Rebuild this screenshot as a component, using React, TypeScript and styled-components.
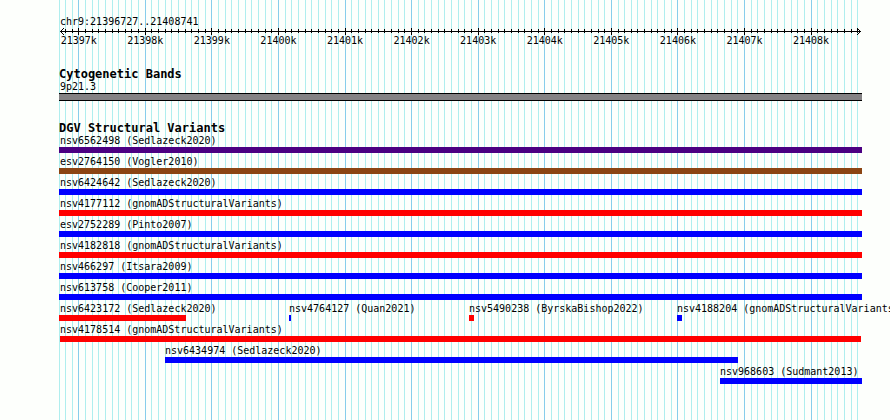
import React from "react";
import styled, { createGlobalStyle } from "styled-components";

const VIEW_START = 21396704;
const VIEW_END = 21408765;

const percent = (bp: number) => ((bp - VIEW_START) / (VIEW_END - VIEW_START)) * 100;

const TICKS = Array.from({ length: 121 }, (_, i) => 21396700 + i * 100).map((bp) => ({
  bp,
  major: bp % 1000 === 0,
}));

interface Feature {
  name: string;
  color: string;
  start?: number;
  end?: number;
}

const BLUE = "#0000ff";
const RED = "#ff0000";

const ROWS: Feature[][] = [
  [{ name: "nsv6562498 (Sedlazeck2020)", color: "#4b0082" }],
  [{ name: "esv2764150 (Vogler2010)", color: "#8b4513" }],
  [{ name: "nsv6424642 (Sedlazeck2020)", color: BLUE }],
  [{ name: "nsv4177112 (gnomADStructuralVariants)", color: RED }],
  [{ name: "esv2752289 (Pinto2007)", color: BLUE }],
  [{ name: "nsv4182818 (gnomADStructuralVariants)", color: RED }],
  [{ name: "nsv466297 (Itsara2009)", color: BLUE }],
  [{ name: "nsv613758 (Cooper2011)", color: BLUE }],
  [
    { name: "nsv6423172 (Sedlazeck2020)", color: RED, end: 21398612 },
    { name: "nsv4764127 (Quan2021)", color: BLUE, start: 21400159, end: 21400189 },
    { name: "nsv5490238 (ByrskaBishop2022)", color: RED, start: 21402862, end: 21402937 },
    { name: "nsv4188204 (gnomADStructuralVariants)", color: BLUE, start: 21405986, end: 21406061 },
  ],
  [{ name: "nsv4178514 (gnomADStructuralVariants)", color: RED, start: 21396719, end: 21408750 }],
  [{ name: "nsv6434974 (Sedlazeck2020)", color: BLUE, start: 21398296, end: 21406903 }],
  [{ name: "nsv968603 (Sudmant2013)", color: BLUE, start: 21406632 }],
];

const GlobalStyle = createGlobalStyle`
  body {
    margin: 0;
    background: #fdfffc;
    overflow-x: hidden;
  }
`;

const Page = styled.main`
  box-sizing: border-box;
  display: flex;
  min-height: 100vh;
  padding: 0 28px 0 59px;
  color: #000;
  font: 10px/13px "DejaVu Sans Mono", "Liberation Mono", monospace;
  white-space: nowrap;
`;

const Panel = styled.div`
  position: relative;
  flex: 1;
  min-width: 0;
  padding: 15px 0 32px;
`;

const GridLines = styled.svg`
  position: absolute;
  inset: 0;
  width: 100%;
  height: 100%;
`;

const Content = styled.div`
  position: relative;
`;

const Label = styled.div`
  height: 13px;
  padding-left: 1px;
`;

const Axis = styled.svg`
  display: block;
  width: 100%;
  height: 7px;
  overflow: visible;
`;

const AxisLabels = styled.div`
  position: relative;
  height: 12px;
  line-height: 12px;
`;

const AxisLabel = styled.span`
  position: absolute;
  transform: translateX(-50%);
`;

const Track = styled.section`
  padding-top: 21px;
`;

const TrackTitle = styled.h2`
  margin: 0;
  height: 12px;
  font-size: 12px;
  line-height: 12px;
  font-weight: bold;
`;

const Band = styled.div`
  box-sizing: border-box;
  height: 8px;
  border: solid #000;
  border-width: 1px 0;
  background: #848284;
`;

const Row = styled.div`
  position: relative;
  height: 21px;
`;

const FeatureBox = styled.div`
  position: absolute;
  top: 0;
`;

const FeatureName = styled.div<{ $atEdge: boolean }>`
  height: 13px;
  padding-left: ${(p) => (p.$atEdge ? 1 : 0)}px;
`;

const FeatureBar = styled.div<{ $color: string }>`
  height: 6px;
  background: ${(p) => p.$color};
`;

function Grid() {
  return (
    <GridLines aria-hidden="true" shapeRendering="crispEdges">
      {TICKS.map(({ bp, major }) => (
        <rect
          key={bp}
          x={`${Math.max(0, percent(bp) - 0.06)}%`}
          width="1"
          height="100%"
          fill={major ? "#87ceeb" : "#afeeee"}
        />
      ))}
    </GridLines>
  );
}

function Ruler() {
  return (
    <>
      <Axis aria-hidden="true" shapeRendering="crispEdges">
        <rect x="1" y="3" width="99.7%" height="1" />
        {TICKS.slice(1).map(({ bp, major }) => (
          <rect
            key={bp}
            x={`${percent(bp) - 0.06}%`}
            y={major ? 0 : 1}
            width="1"
            height={major ? 7 : 4}
          />
        ))}
        <path d="M1 3h1v1h-1zM2 2h1v1h-1zM3 1h1v1h-1zM4 0h1v1h-1zM2 4h1v1h-1zM3 5h1v1h-1zM4 6h1v1h-1z" />
        <svg x="100%" overflow="visible">
          <path d="M-2 3h1v1h-1zM-3 2h1v1h-1zM-4 1h1v1h-1zM-5 0h1v1h-1zM-3 4h1v1h-1zM-4 5h1v1h-1zM-5 6h1v1h-1z" />
        </svg>
      </Axis>
      <AxisLabels>
        {TICKS.filter((t) => t.major).map(({ bp }) => (
          <AxisLabel key={bp} style={{ left: `${percent(bp)}%` }}>
            {bp / 1000}k
          </AxisLabel>
        ))}
      </AxisLabels>
    </>
  );
}

function FeatureItem({ name, color, start = VIEW_START, end = VIEW_END }: Feature) {
  return (
    <FeatureBox style={{ left: `${percent(start)}%`, width: `${percent(end) - percent(start)}%` }}>
      <FeatureName $atEdge={start === VIEW_START}>{name}</FeatureName>
      <FeatureBar $color={color} />
    </FeatureBox>
  );
}

export default function App() {
  return (
    <>
      <GlobalStyle />
      <Page>
        <Panel>
          <Grid />
          <Content>
            <Label>chr9:21396727..21408741</Label>
            <Ruler />
            <Track>
              <TrackTitle>Cytogenetic Bands</TrackTitle>
              <Label>9p21.3</Label>
              <Band />
            </Track>
            <Track>
              <TrackTitle>DGV Structural Variants</TrackTitle>
              {ROWS.map((row) => (
                <Row key={row[0].name}>
                  {row.map((feature) => (
                    <FeatureItem key={feature.name} {...feature} />
                  ))}
                </Row>
              ))}
            </Track>
          </Content>
        </Panel>
      </Page>
    </>
  );
}
